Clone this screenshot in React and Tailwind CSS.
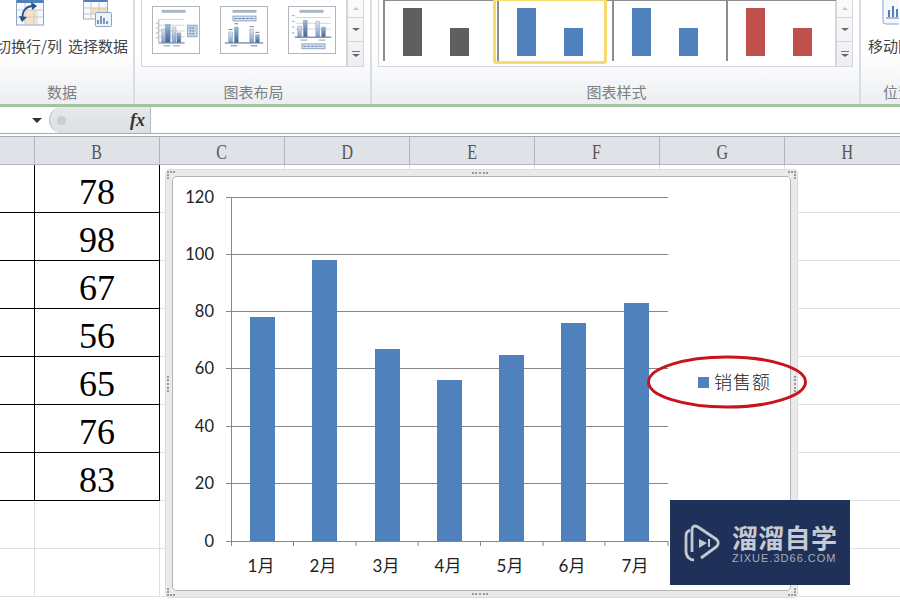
import React from 'react';

const cjk = "font-['Noto_Sans_CJK_SC',sans-serif]";
const columns = ['B', 'C', 'D', 'E', 'F', 'G', 'H'];
const rows = [78, 98, 67, 56, 65, 76, 83, null, null];
const bars = [
  { label: '1月', x: 250, top: 317 },
  { label: '2月', x: 312, top: 260 },
  { label: '3月', x: 375, top: 349 },
  { label: '4月', x: 437, top: 380 },
  { label: '5月', x: 499, top: 355 },
  { label: '6月', x: 561, top: 323 },
  { label: '7月', x: 624, top: 303 },
];
const ticks = [
  { value: 120, y: 197 },
  { value: 100, y: 254 },
  { value: 80, y: 311 },
  { value: 60, y: 368 },
  { value: 40, y: 426 },
  { value: 20, y: 483 },
  { value: 0, y: 541 },
];

function SwitchIcon() {
  return (
    <svg width="28" height="26" viewBox="0 0 28 26">
      <rect x="0.5" y="-3" width="27" height="28" fill="#f6f9fd" stroke="#8ea3bf" />
      <rect x="0.5" y="-3" width="27" height="6" fill="#4f81bd" />
      <rect x="9" y="10" width="13" height="14" fill="#fde2c2" />
      <path d="M9 3V25M18 3V25M1 10H27M1 17H27" stroke="#bccde1" />
      <path d="M7 19C5 12 10 6 17 6" fill="none" stroke="#2c4f86" strokeWidth="1.8" />
      <path d="M15 2L21 6L16 10ZM3 16L11 17L6 22Z" fill="#2c4f86" />
    </svg>
  );
}

function SelectDataIcon() {
  return (
    <svg width="30" height="28" viewBox="0 0 30 28">
      <rect x="0.5" y="-3" width="24" height="22" fill="#f8fafc" stroke="#a0acbb" />
      <rect x="0.5" y="-3" width="24" height="5" fill="#4f81bd" />
      <rect x="8" y="8" width="16" height="6" fill="#fcdcb5" />
      <path d="M8 2V19M16 2V19M1 8H24M1 14H24" stroke="#c0cad6" />
      <rect x="12.5" y="12.5" width="16" height="14" rx="1" fill="#edf3fb" stroke="#8ba3c4" />
      <path d="M15 24V20M18 24V16M21 24V18M24 24V21" stroke="#5a789f" strokeWidth="1.5" />
    </svg>
  );
}

function MoveIcon() {
  return (
    <svg width="17" height="25" viewBox="0 0 17 25">
      <rect x="1" y="-3" width="24" height="27" rx="3" fill="#f5f8fc" stroke="#8ba3c4" />
      <path d="M7 17V10M11 17V6M15 17V9" stroke="#4f81bd" strokeWidth="2" />
      <path d="M4 18H17" stroke="#6b7f99" />
    </svg>
  );
}

function ThumbBars({ d, dark }) {
  return <path d={d} fill={dark ? 'url(#thumbDark)' : 'url(#thumbLight)'} stroke="#6a86ad" strokeWidth="0.4" />;
}

function LayoutThumb({ type }) {
  return (
    <svg width="48" height="48" viewBox="0 0 48 48" className="border border-[#b0b5bc] bg-white">
      <defs>
        <linearGradient id="thumbLight" x1="0" y1="0" x2="0" y2="1">
          <stop offset="0" stopColor="#dfe8f4" />
          <stop offset="1" stopColor="#7f9cc6" />
        </linearGradient>
        <linearGradient id="thumbDark" x1="0" y1="0" x2="0" y2="1">
          <stop offset="0" stopColor="#a3b9d9" />
          <stop offset="1" stopColor="#3f6197" />
        </linearGradient>
      </defs>
      {type === 1 && (
        <g>
          <rect x="9" y="3" width="25" height="3" fill="#a9b4c6" />
          <path d="M6 13H33M6 19H33M6 25H33M6 31H33" stroke="#d0d4da" />
          <path d="M3 17H5M3 22H5M3 27H5M3 32H5" stroke="#a2a9b3" />
          <path d="M6 13V37" stroke="#a2a9b3" />
          <ThumbBars d="M9 23H13V37H9Z" />
          <ThumbBars d="M13 18H18V37H13Z" dark />
          <ThumbBars d="M20 21H24V37H20Z" />
          <ThumbBars d="M25 27H29V37H25Z" dark />
          <path d="M6 37.5H33" stroke="#4f6b93" />
          <rect x="36" y="19" width="10" height="12" fill="#c5d6eb" stroke="#8ca6ca" />
          <path d="M38 22H44M38 25H44M38 28H44" stroke="#4f6f9f" strokeDasharray="2 1" />
          <path d="M11 40.5H18M21 40.5H28" stroke="#8a94a3" />
        </g>
      )}
      {type === 2 && (
        <g>
          <rect x="12" y="3" width="25" height="3" fill="#a9b4c6" />
          <rect x="12.5" y="9.5" width="24" height="5" fill="#dbe5f2" stroke="#8aa0bf" />
          <path d="M14 12H35" stroke="#5e7ba6" strokeDasharray="3 1" />
          <ThumbBars d="M8 26H12V37H8Z" />
          <ThumbBars d="M14 21H18V37H14Z" dark />
          <ThumbBars d="M30 23H34V37H30Z" />
          <ThumbBars d="M36 29H40V37H36Z" dark />
          <path d="M4 37.5H44" stroke="#3f5d8a" />
          <path d="M8 23.5H12M14 17.5H18M30 20.5H34M36 26.5H40M10 40.5H17M31 40.5H38" stroke="#6f7986" />
        </g>
      )}
      {type === 3 && (
        <g>
          <rect x="11" y="3" width="25" height="3" fill="#a9b4c6" />
          <path d="M7 11H44M7 17H44M7 23H44" stroke="#d0d4da" />
          <path d="M3 9H6M3 15H6M3 21H6M3 27H6" stroke="#a2a9b3" />
          <ThumbBars d="M9 20H13V31H9Z" />
          <ThumbBars d="M15 14H19V31H15Z" dark />
          <ThumbBars d="M28 15H32V31H28Z" />
          <ThumbBars d="M34 21H38V31H34Z" dark />
          <path d="M6 31.5H44" stroke="#3f5d8a" />
          <path d="M12 34.5H19M31 34.5H38" stroke="#8a94a3" />
          <rect x="13.5" y="38.5" width="24" height="5" fill="#dbe5f2" stroke="#8aa0bf" />
          <path d="M15 41H36" stroke="#5e7ba6" strokeDasharray="3 1" />
        </g>
      )}
    </svg>
  );
}

function GalleryScroll() {
  return (
    <div className="flex w-[17px] shrink-0 flex-col border-x border-b border-[#d3d6da] bg-gradient-to-b from-[#fbfbfc] to-[#eceef1]">
      <div className="flex h-[18px] items-center justify-center border-b border-[#d3d6da]">
        <div className="h-0 w-0 border-x-[3px] border-b-[3px] border-x-transparent border-b-[#c2c6cb]" />
      </div>
      <div className="flex h-[24px] items-center justify-center border-b border-[#d3d6da]">
        <div className="h-0 w-0 border-x-[4px] border-t-[3px] border-x-transparent border-t-[#666]" />
      </div>
      <div className="flex h-[24px] flex-col items-center justify-center gap-[2px]">
        <div className="h-px w-[8px] bg-[#777]" />
        <div className="h-0 w-0 border-x-[4px] border-t-[3px] border-x-transparent border-t-[#666]" />
      </div>
    </div>
  );
}

function StyleThumb({ color, selected }) {
  const barColor = {
    gray: 'bg-[#5f5f5f]',
    blue: 'bg-[#4f81bd]',
    red: 'bg-[#c0504d]',
  }[color];
  return (
    <div className="relative h-[60px] w-[114.25px] shrink-0 border-l-2 border-[#8d8d8d]">
      <div className="flex h-[55px] items-end gap-[28px] pl-[18px]">
        <div className={`h-[48px] w-[19px] ${barColor}`} />
        <div className={`h-[28px] w-[19px] ${barColor}`} />
      </div>
      {selected && (
        <div className="absolute top-[-3px] left-[-6px] h-[66px] w-[114px] rounded-[3px] border-[3px] border-[#f6d96f]" />
      )}
    </div>
  );
}

function Group({ width, label, labelClass, children }) {
  return (
    <div className={`flex h-full shrink-0 flex-col border-r-2 border-[#d9dde2] ${width}`}>
      <div className="flex h-[80px] overflow-hidden">{children}</div>
      <div className={`${cjk} text-center text-[15px] leading-[24px] text-[#7a7f86] ${labelClass}`}>{label}</div>
    </div>
  );
}

function Ribbon() {
  return (
    <div className="flex h-[104px] overflow-hidden bg-gradient-to-b from-white from-50% to-[#eceef1]">
      <Group width="w-[135px]" label="数据" labelClass="pr-[9px]">
        <div className={`${cjk} flex w-full justify-end gap-[6px] pr-[5px] text-[15px] text-[#444]`}>
          <div className="flex w-[66px] shrink-0 flex-col items-center">
            <div className="flex h-[36px] pl-[2px]"><SwitchIcon /></div>
            <div className="leading-[20px] whitespace-nowrap">切换行/列</div>
          </div>
          <div className="flex w-[60px] shrink-0 flex-col items-center">
            <div className="flex h-[36px]"><SelectDataIcon /></div>
            <div className="leading-[20px] whitespace-nowrap">选择数据</div>
          </div>
        </div>
      </Group>
      <Group width="w-[237px]" label="图表布局" labelClass="pl-[2px]">
        <div className="ml-[6px] flex h-[67px]">
          <div className="flex h-[67px] w-[206px] gap-[20px] border-x border-b border-[#d3d6da] bg-white pt-[6px] pl-[10px]">
            <LayoutThumb type={1} />
            <LayoutThumb type={2} />
            <LayoutThumb type={3} />
          </div>
          <GalleryScroll />
        </div>
      </Group>
      <Group width="w-[489px]" label="图表样式" labelClass="pl-[2px]">
        <div className="ml-[6px] flex h-[67px]">
          <div className="flex h-[67px] w-[458px] border-x border-b border-[#d3d6da] bg-white pl-[4px]">
            <div className="flex h-[60px] border-t border-[#8d8d8d]">
              <StyleThumb color="gray" />
              <StyleThumb color="blue" selected />
              <StyleThumb color="blue" />
              <StyleThumb color="red" />
            </div>
          </div>
          <GalleryScroll />
        </div>
      </Group>
      <div className="flex-1 overflow-hidden">
        <div className={`${cjk} h-[80px] pl-[7px] text-[15px] whitespace-nowrap text-[#444]`}>
          <div className="flex h-[36px] pl-[14px]"><MoveIcon /></div>
          <div className="leading-[20px]">移动图表</div>
        </div>
        <div className={`${cjk} pl-[22px] text-[15px] leading-[24px] whitespace-nowrap text-[#7a7f86]`}>位置</div>
      </div>
    </div>
  );
}

function FormulaBar() {
  return (
    <div className="flex h-[29px] items-stretch border-t-[3px] border-[#a4c3a2] bg-white">
      <div className="flex w-[49px] items-center justify-end pt-px pr-[7px]">
        <div className="h-0 w-0 border-x-[5px] border-t-[5px] border-x-transparent border-t-[#333]" />
      </div>
      <div className="flex w-[101px] items-center justify-between rounded-l-[14px] border-l border-[#b5bbc2] bg-gradient-to-b from-[#e6e8ec] to-[#dcdfe4] pr-[5px] pl-[7px]">
        <div className="h-[9px] w-[9px] rounded-full bg-[#c9ced4]" />
        <span className="font-['Liberation_Serif',serif] text-[18px] leading-none font-bold italic text-[#333]">fx</span>
      </div>
      <div className="flex-1 border-l border-[#b5bbc2]" />
    </div>
  );
}

function Sheet() {
  return (
    <div className="grid grid-cols-[35px_repeat(7,125px)] bg-white">
      <div className="col-span-8 h-[4px] border-t border-b border-[#a6abb1]" />
      <div className="h-[28px] border-r border-b border-[#b1b6bc] bg-[#dfe2e7]" />
      {columns.map((col) => (
        <div
          key={col}
          className="flex h-[28px] items-center justify-center border-r border-b border-[#b1b6bc] bg-[#dfe2e7] pt-[2px] font-['Liberation_Serif',serif] text-[20px] text-[#555]"
        >
          <span className="inline-block scale-x-[0.8]">{col}</span>
        </div>
      ))}
      {rows.map((value, idx) => (
        <React.Fragment key={idx}>
          <div className={`h-[48px] border-r border-b ${value ? 'border-black' : 'border-[#dcdfe3]'}`} />
          <div
            className={`flex h-[48px] items-center justify-center border-r border-b pt-[7px] font-['Liberation_Serif',serif] text-[36px] leading-none text-black ${value ? 'border-black' : 'border-[#dcdfe3]'}`}
          >
            {value}
          </div>
          {columns.slice(1).map((col) => (
            <div key={col} className="h-[48px] border-r border-b border-[#dcdfe3]" />
          ))}
        </React.Fragment>
      ))}
    </div>
  );
}

// viewBox uses page pixels, chart area starts at (173,177)
function ChartDrawing() {
  return (
    <svg width="617" height="413" viewBox="173 177 617 413" className="overflow-visible font-['Lato',sans-serif]">
      {ticks.map((t) => (
        <g key={t.value}>
          <path d={`M226 ${t.y + 0.5}H668`} stroke="#868686" />
          <text x="214" y={t.y + 6} textAnchor="end" fontSize="16.5" fill="#222">{t.value}</text>
        </g>
      ))}
      <path d="M231.5 197V546" stroke="#868686" />
      {[293.5, 356, 418, 480.5, 543, 605, 668].map((x) => (
        <path key={x} d={`M${x} 541V546`} stroke="#868686" />
      ))}
      {bars.map((b) => (
        <g key={b.label}>
          <rect x={b.x} y={b.top} width="25" height={541 - b.top} fill="#4f81bd" />
          <text
            x={b.x + 11}
            y="572"
            textAnchor="middle"
            fontSize="17"
            fill="#222"
            fontFamily="Lato, 'Noto Sans CJK SC', sans-serif"
          >
            {b.label}
          </text>
        </g>
      ))}
      <rect x="698" y="377" width="11" height="11" fill="#4f81bd" />
      <text x="714" y="389" fontSize="18" letterSpacing="1" fill="#222" fontFamily="'Noto Sans CJK SC', sans-serif" fontWeight="300">
        销售额
      </text>
      <ellipse cx="727" cy="382" rx="78.5" ry="25" fill="none" stroke="#c8141c" strokeWidth="3" />
    </svg>
  );
}

function Handle({ className }) {
  return <div className={`absolute border-dotted border-[#9a9a9a] ${className}`} />;
}

function ChartFrame() {
  return (
    <div className="absolute top-[170px] left-[166px] h-[427px] w-[631px] rounded-[4px] border-[6px] border-[#eaeaea] bg-white shadow-[0_0_0_1px_#dcdcdc]">
      <div className="h-full w-full rounded-[4px] border border-[#b4b4b4]">
        <ChartDrawing />
      </div>
      <Handle className="top-[-4px] left-[300px] w-[16px] border-t-2" />
      <Handle className="bottom-[-4px] left-[300px] w-[16px] border-t-2" />
      <Handle className="top-[200px] left-[-5px] h-[16px] border-l-2" />
      <Handle className="top-[200px] right-[-5px] h-[16px] border-l-2" />
      <Handle className="top-[-5px] left-[-5px] h-[8px] w-[8px] border-t-2 border-l-2" />
      <Handle className="top-[-5px] right-[-5px] h-[8px] w-[8px] border-t-2 border-r-2" />
      <Handle className="bottom-[-5px] left-[-5px] h-[8px] w-[8px] border-b-2 border-l-2" />
      <Handle className="right-[-5px] bottom-[-5px] h-[8px] w-[8px] border-r-2 border-b-2" />
    </div>
  );
}

function Watermark() {
  return (
    <div className="absolute top-[500px] left-[670px] flex h-[85px] w-[180px] items-center gap-[12px] bg-[#1f3059] pl-[14px]">
      <svg width="36" height="38" viewBox="0 0 36 38" fill="none" stroke="#c3c7cf" strokeWidth="2.8">
        <path d="M6 6C2 8 2 10 2 13V27C2 33 6 36 10 36" />
        <path d="M8 28V6C8 2 11 1 14 3L32 15C35 17 35 21 32 23L17 34" />
        <path d="M15 15L23 19L15 24Z" fill="#c3c7cf" stroke="none" />
        <path d="M25 15V23" strokeWidth="2" />
      </svg>
      <div className="flex flex-col gap-[3px] pt-[2px]">
        <div className={`${cjk} text-[26px] leading-[26px] font-bold tracking-[0.3px] whitespace-nowrap text-[#c6cad2]`}>溜溜自学</div>
        <div className="font-['Liberation_Sans',sans-serif] text-[11px] leading-[11px] tracking-[1px] whitespace-nowrap text-[#a9afbc]">
          ZIXUE.3D66.COM
        </div>
      </div>
    </div>
  );
}

export default function App() {
  return (
    <div className="relative h-[600px] w-[900px] overflow-hidden bg-white">
      <Ribbon />
      <FormulaBar />
      <Sheet />
      <ChartFrame />
      <Watermark />
    </div>
  );
}
